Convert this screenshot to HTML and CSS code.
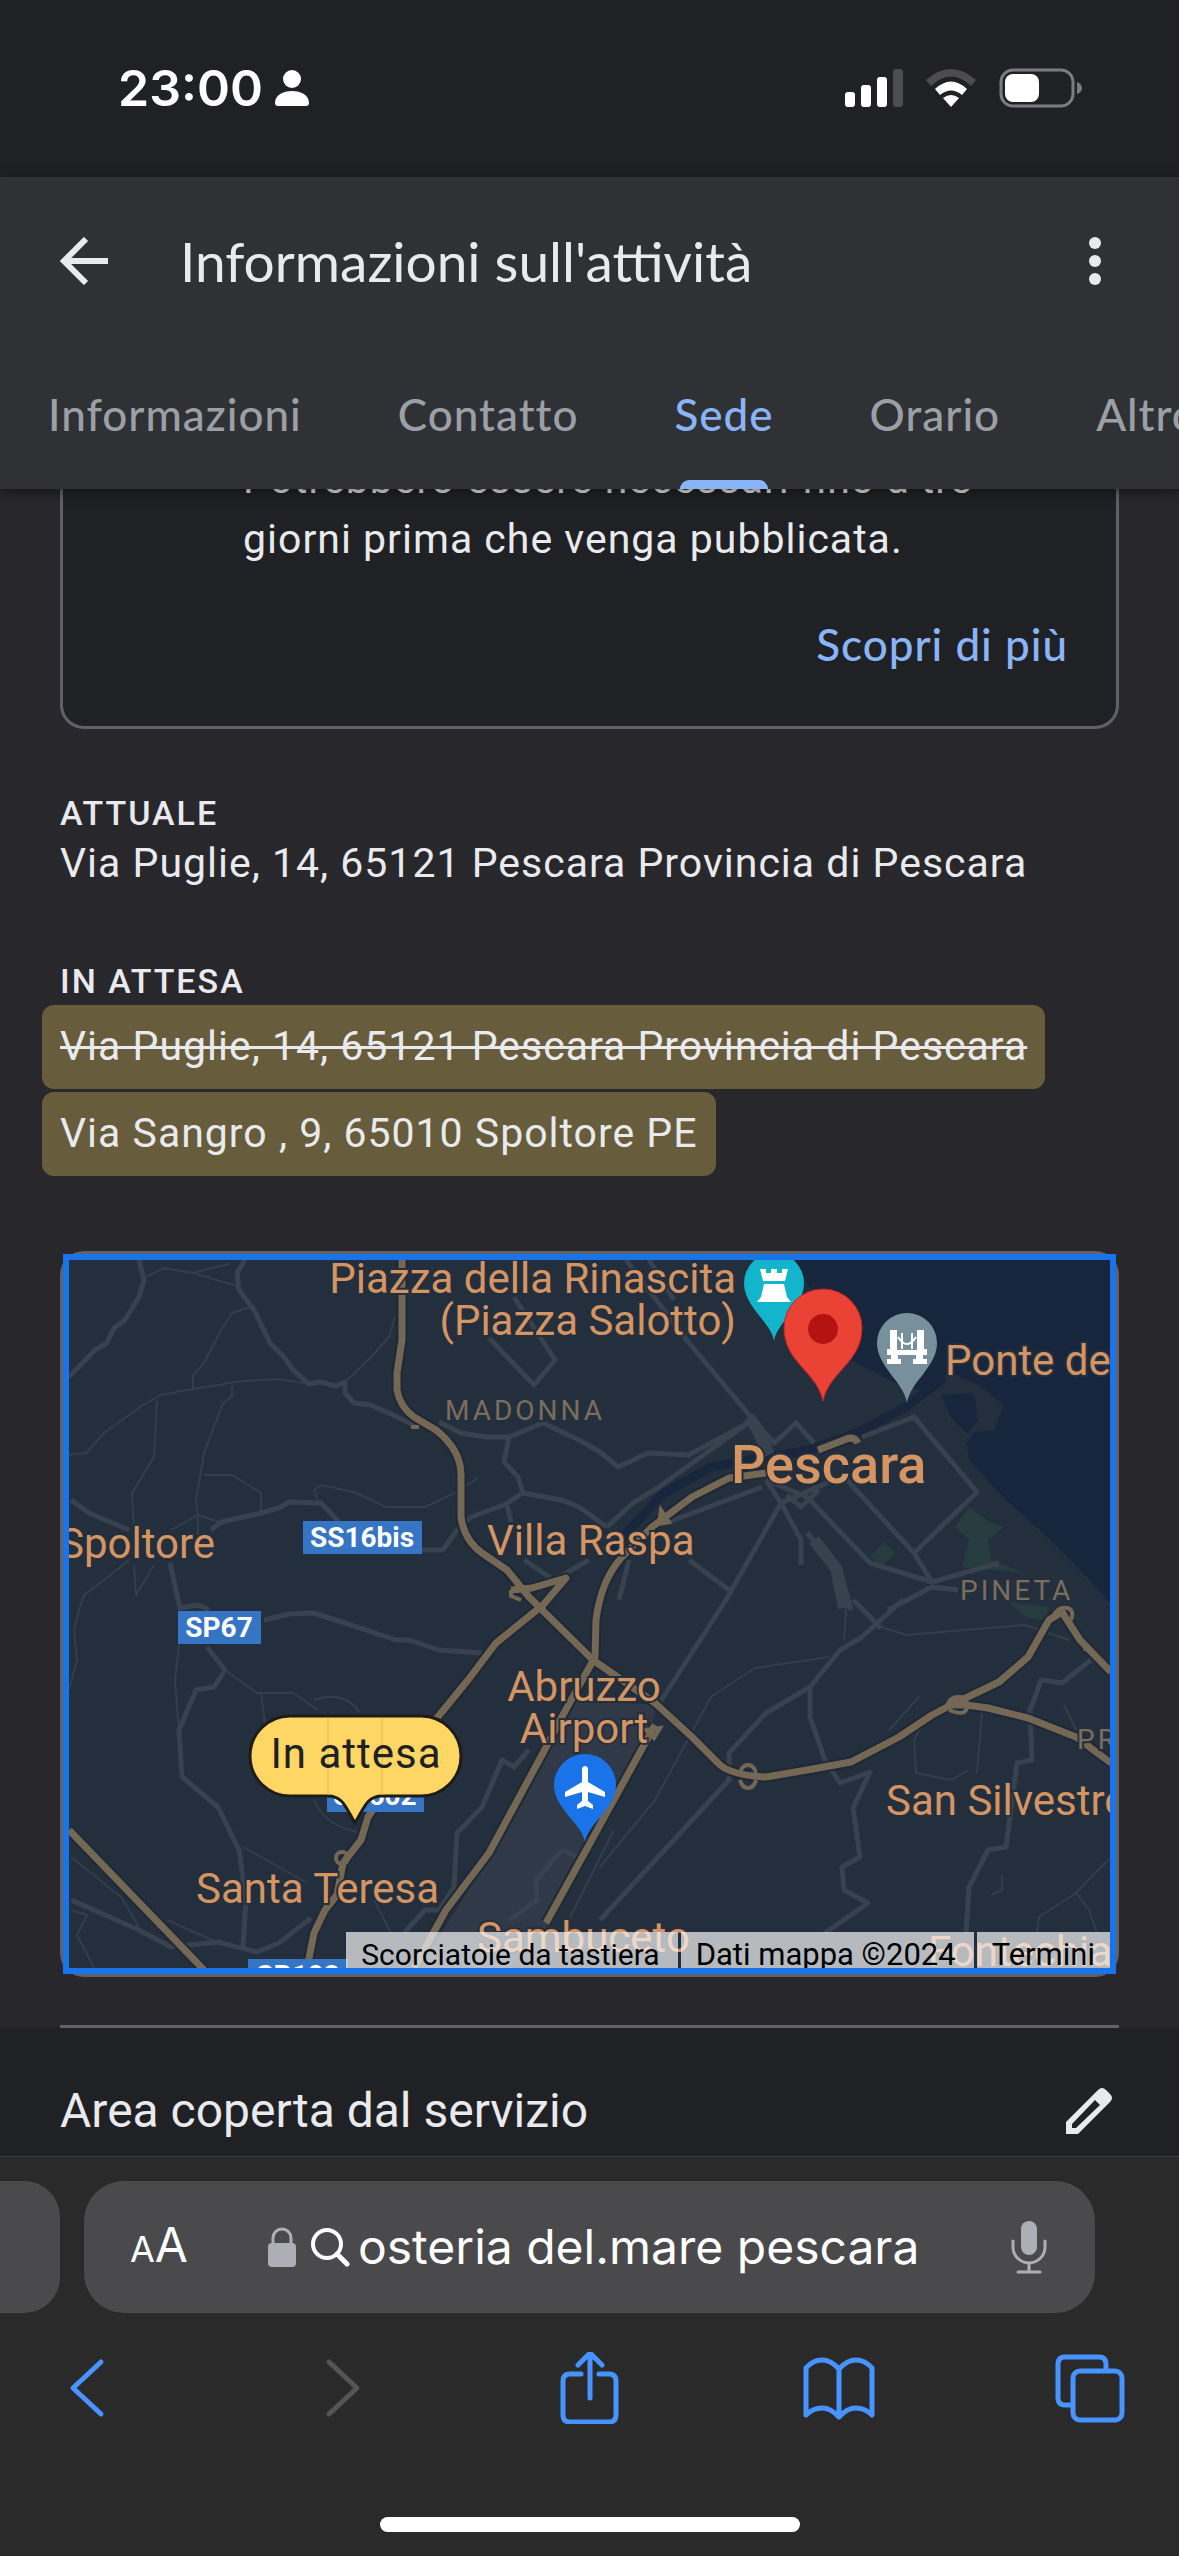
FILE: index.html
```html
<!DOCTYPE html>
<html lang="it">
<head>
  <meta charset="UTF-8" />
  <meta name="viewport" content="width=device-width, initial-scale=1.0"/>
  <title>Informazioni sull'attività</title>
  <link rel="stylesheet" href="styles.css">
</head>
<body>
  <div class="status-bar">
    <div class="status-left">
      <span>23:00</span>
      <svg width="34" height="38" viewBox="0 0 34 38" fill="#fff"><circle cx="17" cy="10" r="9"/><path d="M0 34C0 26 8 22 17 22s17 4 17 12q0 3-3 3H3q-3 0-3-3z"/></svg>
    </div>
    <div class="status-right">
      <svg width="58" height="38" viewBox="0 0 58 38" fill="#fff"><rect y="23" width="10" height="15" rx="3"/><rect x="16" y="16" width="10" height="22" rx="3"/><rect x="32" y="8" width="10" height="30" rx="3"/><rect x="48" width="10" height="38" rx="3" fill="#4d4d50"/></svg>
      <svg width="52" height="38" viewBox="0 0 52 38"><path d="M1 11Q26-11 51 11L46 17Q26-2 6 17z" fill="#4d4d50"/><path d="M10 20Q26 5 42 20L37 26Q26 17 15 26z" fill="#fff"/><path d="M18 29Q26 23 34 29L26 38z" fill="#fff"/></svg>
      <svg width="84" height="40" viewBox="0 0 84 40"><rect x="2" y="2" width="72" height="36" rx="12" fill="none" stroke="#7c7c7f" stroke-width="3"/><rect x="6" y="6" width="34" height="28" rx="8" fill="#fff"/><path d="M78 14q5 2 5 6t-5 6z" fill="#7c7c7f"/></svg>
    </div>
  </div>

  <header class="app-header">
    <div class="title-row">
      <button class="icon-btn" aria-label="Indietro">
        <svg width="48" height="48" viewBox="0 0 48 48" fill="none" stroke="#e8eaed" stroke-width="6"><path d="M48 24H4M26 2L4 24l22 22"/></svg>
      </button>
      <h1>Informazioni sull'attività</h1>
      <button class="icon-btn" aria-label="Altre opzioni">
        <svg width="48" height="48" viewBox="0 0 48 48" fill="#e8eaed"><circle cx="24" cy="6" r="6"/><circle cx="24" cy="24" r="6"/><circle cx="24" cy="42" r="6"/></svg>
      </button>
    </div>
    <nav class="tabs">
      <a href="#informazioni">Informazioni</a>
      <a href="#contatto">Contatto</a>
      <a href="#sede" class="active">Sede</a>
      <a href="#orario">Orario</a>
      <a href="#altro">Altro</a>
    </nav>
  </header>

  <main>
    <section class="sede" id="sede">
      <div class="card">
        <p>Potrebbero essere necessari fino a tre<br>giorni prima che venga pubblicata.</p>
        <a class="card-link" href="#scopri">Scopri di più</a>
      </div>

      <h2>ATTUALE</h2>
      <p class="address">Via Puglie, 14, 65121 Pescara Provincia di Pescara</p>

      <h2>IN ATTESA</h2>
      <div class="pending">
        <del>Via Puglie, 14, 65121 Pescara Provincia di Pescara</del>
        <ins>Via Sangro , 9, 65010 Spoltore PE</ins>
      </div>

      <div class="map">
        <div class="map-frame">
          <svg class="map-canvas" viewBox="0 0 1041 708">
            <rect width="1041" height="708" fill="#242f3e"/>
            <!-- mare e fiume -->
            <path d="M725 0L752 47 782 100 826 123 863 133 878 160 897 177 900 200 937 240 974 273 1011 310 1041 343V0z" fill="#17263c"/>
            <path d="M863 133L880 112 910 125 935 145 925 170 905 172 897 185 880 165z" fill="#242f3e"/>
            <path d="M872 135L905 133 909 160 898 174 882 158z" fill="#17263c"/>
            <path d="M875 118L837 147 790 172 740 190 642 207 595 233 560 270 545 290" fill="none" stroke="#17263c" stroke-width="9"/>
            <!-- parchi e aeroporto -->
            <path d="M900 247L922 263 935 267 919 280 922 300 956 313 893 307 900 280 886 267zM815 282L826 293 812 307 801 297zM940 342l40 5-4 14-20-4z" fill="#263c3f"/>
            <path d="M500 440L588 445 578 485 478 668 440 708H350L425 590 478 490z" fill="#2f3948"/>

            <g class="street-thin">
              <path d="M0 195L17 193 35 173 74 145 92 135 124 129 174 121 210 119 240 124"/>
              <path d="M88 140L85 197 63 233 65 270M163 125V137L154 143 135 193 127 240 129 257V275"/>
              <path d="M135 215H163L192 233V253M249 240L245 230 252 225 285 232 317 247H356L388 232 410 217"/>
              <path d="M181 47L163 53 152 70 135 103 124 115V128M276 122L302 97 320 77 326 57"/>
              <path d="M77 17L95 8 124 13 160 4M124 13L168 26M102 270L129 255 150 262"/>
              <path d="M60 300L35 320 15 335 10 350 5 370 8 400 0 430M65 305L67 335 85 305M110 385L106 420 110 470"/>
              <path d="M2 597L52 637 70 667M174 587L210 607 238 623M156 410L188 433H224L249 450M192 433L196 465M245 440Q275 430 290 452M245 540Q255 565 288 572"/>
              <path d="M2 650L18 655 8 675 25 708M98 660L150 683M305 640L322 673"/>
              <path d="M778 340L775 380M760 397L686 408 642 437 586 540 531 607M812 367L838 375 956 365 1000 380"/>
              <path d="M852 467L845 480 847 513 882 520 900 510M913 453L908 513M820 470L850 437M995 445L1007 470"/>
              <path d="M1042 597L1007 633 970 657 968 673M1007 633L1020 650 1028 673M933 615V630L922 635M545 570L500 660"/>
            </g>
            <g class="street">
              <path d="M70 0L75 20 70 37 56 60 45 68 38 83 26 90 0 117"/>
              <path d="M176 0L168 13 170 30 185 50 201 83 215 97 224 110 240 124 251 122 267 126 276 122V133L285 143 302 145 324 155 349 167"/>
              <path d="M2 240L20 253 60 270M142 270L152 262 192 253 210 248 220 242 252 243 270 262"/>
              <path d="M352 290H374L388 270 402 257 435 245 454 233 492 240 510 247 538 267M438 245L442 262"/>
              <path d="M370 162L392 173 417 177H440L474 163 510 180 531 192 549 207 579 193 620 195 679 163M440 177L435 202 449 217 454 233"/>
              <path d="M420 78L465 125 486 100 445 37M455 300L485 320 520 300"/>
              <path d="M101 303L111 348 130 345 140 350M138 387L156 410 145 427 127 430 110 470 113 517 149 547 170 590 177 640 174 687"/>
              <path d="M195 360L220 354 245 353 288 367 327 380 340 380 370 390 413 393"/>
              <path d="M2 640L70 670 102 687 149 682 188 692 210 683 242 658"/>
              <path d="M460 490L445 507 433 500 413 547 388 573 385 627 370 650 356 650 335 673M508 597L493 590 467 620 468 640 440 660"/>
              <path d="M557 0L620 83 682 157 705 183 727 163 745 183M580 0L605 40M679 163L590 227 564 243 538 267"/>
              <path d="M793 177L845 157 908 232 845 293 863 322 930 303M778 220L845 293M697 220L738 237 801 303 863 322"/>
              <path d="M712 243L657 340 586 450M697 220L712 243 732 280V305M597 263L693 227M620 300L660 330M560 300L550 340M712 243L765 220M718 235L732 247 750 230"/>
              <path d="M738 273L771 310 782 350M819 350L863 327 889 330"/>
              <path d="M834 340L793 377 771 390 741 427 697 453 660 493V520L531 660M784 340L812 368"/>
              <path d="M741 427V457L756 500 771 523 801 512 784 548 791 597 773 607 775 630 799 643 756 673"/>
              <path d="M1022 400L993 423 972 420 965 440 961 450 963 500 948 503 937 587 919 590 900 627 897 673"/>
            </g>
            <path d="M680 157l8 12 12 26M745 280l22 28 8 40" fill="none" stroke="#38414e" stroke-width="12"/>

            <!-- strade principali: prima il bordo scuro, poi il colore -->
            <g class="highway-edge">
              <path d="M333 0V80L328 113V130Q331 147 345 157L367 170Q392 190 392 215V257Q395 280 413 293L438 310 460 337 524 400 586 443 623 477 649 503Q660 515 697 517L738 510 782 502 830 477 863 455 882 445 930 422 959 397 980 360 993 352 1011 380 1042 412"/>
              <path d="M882 445L897 445 919 448 959 458 1007 477 1042 503"/>
              <path d="M789 183Q785 175 775 180L749 190M697 213L660 218 623 237 583 267 553 297Q532 320 527 360L526 397 495 453 474 493 420 593 377 650 345 708"/>
              <path d="M442 330L463 328 497 318 474 345 427 383 399 420 350 480 299 557 292 580 274 603 268 635 256 650 245 673 238 708"/>
              <path d="M0 570L135 710M586 465L477 663"/>
            </g>
            <g class="highway">
              <path d="M333 0V80L328 113V130Q331 147 345 157L367 170Q392 190 392 215V257Q395 280 413 293L438 310 460 337 524 400 586 443 623 477 649 503Q660 515 697 517L738 510 782 502 830 477 863 455 882 445 930 422 959 397 980 360 993 352 1011 380 1042 412"/>
              <path d="M882 445L897 445 919 448 959 458 1007 477 1042 503"/>
              <path d="M789 183Q785 175 775 180L749 190M697 213L660 218 623 237 583 267 553 297Q532 320 527 360L526 397 495 453 474 493 420 593 377 650 345 708"/>
              <path d="M442 330L463 328 497 318 474 345 427 383 399 420 350 480 299 557 292 580 274 603 268 635 256 650 245 673 238 708"/>
              <path d="M0 570L135 710M586 465L477 663"/>
            </g>
            <g fill="none" stroke="#746855" stroke-width="4">
              <path d="M671 513q2-8 8-8t8 8M671 520q2 8 8 8t8-8"/>
              <path d="M878 445q3-8 12-8t8 10-18 3"/>
              <path d="M984 356q6-10 14-8t4 12"/>
              <circle cx="273" cy="598" r="6"/>
              <path d="M350 167l-8 0M592 250l8 12-10 2zM577 470l14-2-6 10zM1015 388l6 4M442 330v6l10 4"/>
            </g>

            <g class="place">
              <text x="667" y="33" text-anchor="end">Piazza della Rinascita</text>
              <text x="667" y="75" text-anchor="end">(Piazza Salotto)</text>
              <text x="876" y="115">Ponte del Mare</text>
              <text x="-10" y="298">Spoltore</text>
              <text x="418" y="295">Villa Raspa</text>
              <text x="515" y="441" text-anchor="middle">Abruzzo</text>
              <text x="515" y="483" text-anchor="middle">Airport</text>
              <text x="817" y="555">San Silvestro</text>
              <text x="127" y="643">Santa Teresa</text>
              <text x="408" y="692">Sambuceto</text>
              <text x="859" y="706">Fontechiaro</text>
              <text x="662" y="223" class="city">Pescara</text>
            </g>
            <g class="district">
              <text x="376" y="160">MADONNA</text>
              <text x="891" y="340">PINETA</text>
              <text x="1008" y="489">PRIMO</text>
            </g>

            <g fill="#3674c4">
              <rect x="234" y="261" width="119" height="33"/>
              <rect x="109" y="351" width="83" height="33"/>
              <rect x="258" y="519" width="97" height="33"/>
              <rect x="179" y="699" width="100" height="33"/>
            </g>
            <g class="road-number">
              <text x="293" y="287">SS16bis</text>
              <text x="150" y="377">SP67</text>
              <text x="306" y="545">SR602</text>
              <text x="229" y="725">SP103</text>
            </g>

            <!-- segnaposto -->
            <path d="M705 81C702 62 675 47 675 23a30 30 0 0 1 60 0C735 47 708 62 705 81z" fill="#12b5cb"/>
            <path d="M691 9h6v4h5V9h6v4h5V9h6l-3 12h-22zM695 24h20l3 13 4 5H688l4-5z" fill="#fff"/>
            <path d="M754 141C748 112 715 102 715 68a39 39 0 0 1 78 0C793 102 760 112 754 141z" fill="#ea4335" stroke="#c5221f" stroke-width="1"/>
            <circle cx="754" cy="69" r="15" fill="#b31412"/>
            <path d="M838 143C835 122 808 107 808 83a30 30 0 0 1 60 0C868 107 841 122 838 143z" fill="#78909c"/>
            <path d="M821 70h7v20h20V70h7v19h3v6h-4v4h4v5h-14v-5h3v-4h-18v4h3v5h-14v-5h4v-4h-4v-6h3z" fill="#fff"/>
            <path d="M829 77q9 14 18 0M833 73v16M843 73v16" fill="none" stroke="#fff" stroke-width="2"/>
            <path d="M516 582C513 563 485 549 485 525a31 31 0 0 1 62 0C547 549 519 563 516 582z" fill="#1a73e8"/>
            <path d="M516 506q3 0 3 4v12l17 10v5l-17-5v9l5 4v4l-8-3-8 3v-4l5-4v-9l-17 5v-5l17-10v-12q0-4 3-4z" fill="#fff"/>

            <path d="M221 456H352a40 40 0 0 1 0 80H313C298 536 295 548 286 563C277 548 274 536 259 536H221a40 40 0 0 1 0-80z" fill="#fdd663" stroke="#1f1b16" stroke-width="3"/>
            <path d="M259 458V535M313 458V535" stroke="#d8b754" stroke-width="1"/>
            <text x="287" y="508" class="bubble-text">In attesa</text>
          </svg>
          <div class="map-credits">
            <button>Scorciatoie da tastiera</button>
            <span>Dati mappa ©2024</span>
            <a href="#termini">Termini</a>
          </div>
        </div>
      </div>
      <hr>
    </section>

    <section class="service">
      <h3>Area coperta dal servizio</h3>
      <button class="icon-btn" aria-label="Modifica">
        <svg width="46" height="46" viewBox="0 0 46 46"><path fill="#e8eaed" fill-rule="evenodd" d="M0 46V34L32 2Q36-2 40 2L44 6Q48 10 44 14L12 46zM6 36V40H10L34 17 29 12z"/></svg>
      </button>
    </section>
  </main>

  <footer class="browser">
    <div class="address-row">
      <div class="prev-tab"></div>
      <div class="address-bar">
        <button class="text-size" aria-label="Dimensioni testo"><small>A</small>A</button>
        <svg width="28" height="40" viewBox="0 0 28 40"><rect y="16" width="28" height="24" rx="4" fill="#aeaeb6"/><path d="M5 18V11a9 9 0 0 1 18 0v7" fill="none" stroke="#aeaeb6" stroke-width="3"/></svg>
        <svg class="search-icon" width="40" height="40" viewBox="0 0 40 40" fill="none" stroke="#fff" stroke-width="4" stroke-linecap="round"><circle cx="17" cy="17" r="14"/><path d="M27 27l10 10" stroke-width="5"/></svg>
        <input type="text" aria-label="Indirizzo" value="osteria del.mare pescara">
        <button class="icon-btn" aria-label="Dettatura">
          <svg width="36" height="54" viewBox="0 0 36 54" fill="none" stroke="#aeaeb6" stroke-width="3" stroke-linecap="round"><rect x="10" y="1" width="16" height="34" rx="8" fill="#aeaeb6" stroke="none"/><path d="M2 21v6a16 16 0 0 0 32 0v-6M18 43v9M7 52h22"/></svg>
        </button>
      </div>
    </div>
    <div class="toolbar">
      <button aria-label="Indietro"><svg width="72" height="72" viewBox="0 0 72 72"><path d="M47 10L19 36l28 26"/></svg></button>
      <button class="disabled" aria-label="Avanti" disabled><svg width="72" height="72" viewBox="0 0 72 72"><path d="M25 10l28 26-28 26"/></svg></button>
      <button aria-label="Condividi"><svg width="72" height="72" viewBox="0 0 72 72"><path d="M27 22H16q-7 0-7 7v34q0 7 7 7h39q7 0 7-7V29q0-7-7-7H45M36 46V1M24 13L36 1l12 12"/></svg></button>
      <button aria-label="Preferiti"><svg width="72" height="72" viewBox="0 0 72 72"><path d="M36 17Q28 8 19 8T3 16V63Q10 56 19 56T36 65Q44 56 53 56T69 63V16Q62 8 53 8T36 17V65"/></svg></button>
      <button aria-label="Pannelli"><svg width="72" height="72" viewBox="0 0 72 72"><path d="M19 53H12q-7 0-7-7V12q0-7 7-7H46q7 0 7 7v6"/><rect x="20" y="19" width="49" height="49" rx="7"/></svg></button>
    </div>
    <div class="home-indicator"></div>
  </footer>
</body>
</html>
```
FILE: styles.css
```css
* {
  box-sizing: border-box;
}

body {
  margin: 0;
  min-height: 100vh;
  display: flex;
  flex-direction: column;
  overflow-x: hidden;
  background-color: #202124;
  color: #e8eaed;
  font-family: Roboto, Arial, sans-serif;
  font-size: 41px;
  line-height: 60px;
}

h1, h2, h3, p {
  margin: 0;
  font-weight: 400;
}

svg {
  display: block;
  flex-shrink: 0;
}

a {
  color: inherit;
  text-decoration: none;
}

button {
  padding: 0;
  border: none;
  background: none;
  color: inherit;
  font: inherit;
  cursor: pointer;
}

/* barra di stato */
.status-bar {
  display: flex;
  justify-content: space-between;
  height: 177px;
  padding: 58px 96px 0 118px;
  color: #fff;
  font-family: Inter, sans-serif;
  font-size: 50px;
  font-weight: 600;
}

.status-left, .status-right {
  display: flex;
  align-items: center;
  height: 60px;
  gap: 12px;
}

.status-right {
  gap: 22px;
}

/* intestazione */
.app-header {
  position: relative;
  z-index: 1;
  background-color: #303134;
  box-shadow: 0 3px 12px rgba(0, 0, 0, 0.5);
}

.title-row {
  display: flex;
  align-items: center;
  height: 168px;
  padding: 0 60px;
}

h1 {
  flex: 1;
  margin-left: 72px;
  font-family: Lato, sans-serif;
  font-size: 55px;
}

.tabs {
  display: flex;
  height: 144px;
  overflow: hidden;
  white-space: nowrap;
  color: #9aa0a6;
  font-family: Lato, sans-serif;
  font-size: 44px;
  font-weight: 500;
  letter-spacing: 1px;
}

.tabs a {
  position: relative;
  flex-shrink: 0;
  padding: 0 48px;
  line-height: 138px;
}

.tabs .active {
  color: #8ab4f8;
}

.tabs .active::after {
  content: "";
  position: absolute;
  left: 54px;
  right: 54px;
  bottom: 0;
  height: 9px;
  border-radius: 9px 9px 0 0;
  background-color: #8ab4f8;
}

/* contenuto */
main {
  flex: 1;
}

.sede {
  padding: 0 60px;
  background-color: #28272c;
  letter-spacing: 1px;
}

.card {
  display: flex;
  flex-direction: column;
  margin-top: -83px;
  padding: 40px 48px 52px 180px;
  border: 3px solid #5f6368;
  border-radius: 24px;
  background-color: #202124;
}

.card-link {
  align-self: flex-end;
  margin-top: 45px;
  color: #8ab4f8;
  font-family: Lato, sans-serif;
  font-size: 44px;
  font-weight: 500;
}

h2 {
  margin-top: 64px;
  font-size: 34px;
  font-weight: 500;
  line-height: 40px;
  letter-spacing: 2px;
}

.address {
  margin-bottom: 68px;
}

.address + h2 {
  margin-top: 0;
}

.pending {
  display: flex;
  flex-direction: column;
  align-items: flex-start;
  gap: 3px;
  margin: 4px 0 0 -18px;
}

.pending del, .pending ins {
  padding: 11px 18px 13px;
  border-radius: 12px;
  background-color: #675c3c;
}

.pending del {
  text-decoration-thickness: 3px;
}

.pending ins {
  text-decoration: none;
}

/* mappa */
.map {
  margin-top: 75px;
  padding: 3px;
  border-radius: 24px;
  background-color: #5f6368;
}

.map-frame {
  position: relative;
  overflow: hidden;
  border: 6px solid #1a73e8;
}

.map-canvas {
  width: 100%;
  height: auto;
  letter-spacing: 0;
}

.street, .street-thin {
  fill: none;
  stroke: #38414e;
  stroke-width: 5;
  stroke-linejoin: round;
}

.street-thin {
  stroke: #333d4b;
  stroke-width: 2;
}

.highway, .highway-edge {
  fill: none;
  stroke: #746855;
  stroke-width: 7;
  stroke-linejoin: round;
}

.highway-edge {
  stroke: #1f2835;
  stroke-width: 11;
}

.place, .district {
  fill: #d59563;
  stroke: #242f3e;
  stroke-width: 4;
  paint-order: stroke;
  font-size: 42px;
}

.city {
  font-size: 54px;
  font-weight: 500;
}

.district {
  fill: #7a6d5d;
  font-size: 28px;
  letter-spacing: 3px;
}

.road-number {
  fill: #fff;
  font-size: 28px;
  font-weight: 700;
  text-anchor: middle;
}

.bubble-text {
  fill: #202124;
  font-size: 42px;
  letter-spacing: 1px;
  text-anchor: middle;
}

.map-credits {
  position: absolute;
  right: 0;
  bottom: 0;
  display: flex;
  gap: 3px;
  height: 36px;
  overflow: hidden;
  color: #000;
  font-size: 31px;
  line-height: 45px;
  letter-spacing: 0;
  white-space: nowrap;
}

.map-credits > * {
  padding: 0 18px 0 15px;
  background-color: rgba(245, 245, 245, 0.7);
}

.map-credits button {
  font-size: 30px;
  letter-spacing: 0;
}

.map-credits a {
  padding-right: 15px;
}

hr {
  height: 3px;
  margin: 48px 0 0;
  border: none;
  background-color: #5f6368;
}

/* area servizio */
.service {
  display: flex;
  align-items: center;
  justify-content: space-between;
  padding: 53px 67px 15px 60px;
}

h3 {
  font-size: 48px;
}

/* barra del browser */
.browser {
  border-top: 1px solid #3c3c3e;
  background-color: #2a2a2b;
}

.address-row {
  display: flex;
  gap: 24px;
  padding: 24px 84px 0 0;
}

.prev-tab {
  flex-shrink: 0;
  width: 60px;
  border-radius: 0 36px 36px 0;
  background-color: #4a4a4c;
}

.address-bar {
  flex: 1;
  min-width: 0;
  display: flex;
  align-items: center;
  height: 132px;
  padding: 0 48px 0 46px;
  border-radius: 40px;
  background-color: #4a4a4c;
  color: #fff;
  font-family: Inter, sans-serif;
  font-size: 48px;
}

.text-size {
  margin-right: 80px;
}

.text-size small {
  font-size: 36px;
}

.search-icon {
  margin: 0 8px 0 14px;
}

.address-bar input {
  flex: 1;
  min-width: 0;
  padding: 0;
  border: none;
  outline: none;
  background: none;
  color: inherit;
  font: inherit;
}

.toolbar {
  display: flex;
  align-items: center;
  justify-content: space-between;
  height: 150px;
  padding: 0 54px;
}

.toolbar svg {
  fill: none;
  stroke: #4794ff;
  stroke-width: 5;
  stroke-linecap: round;
  stroke-linejoin: round;
}

.toolbar .disabled svg {
  stroke: #555557;
}

.home-indicator {
  width: 420px;
  height: 15px;
  margin: 54px auto 24px;
  border-radius: 8px;
  background-color: #fff;
}
```
